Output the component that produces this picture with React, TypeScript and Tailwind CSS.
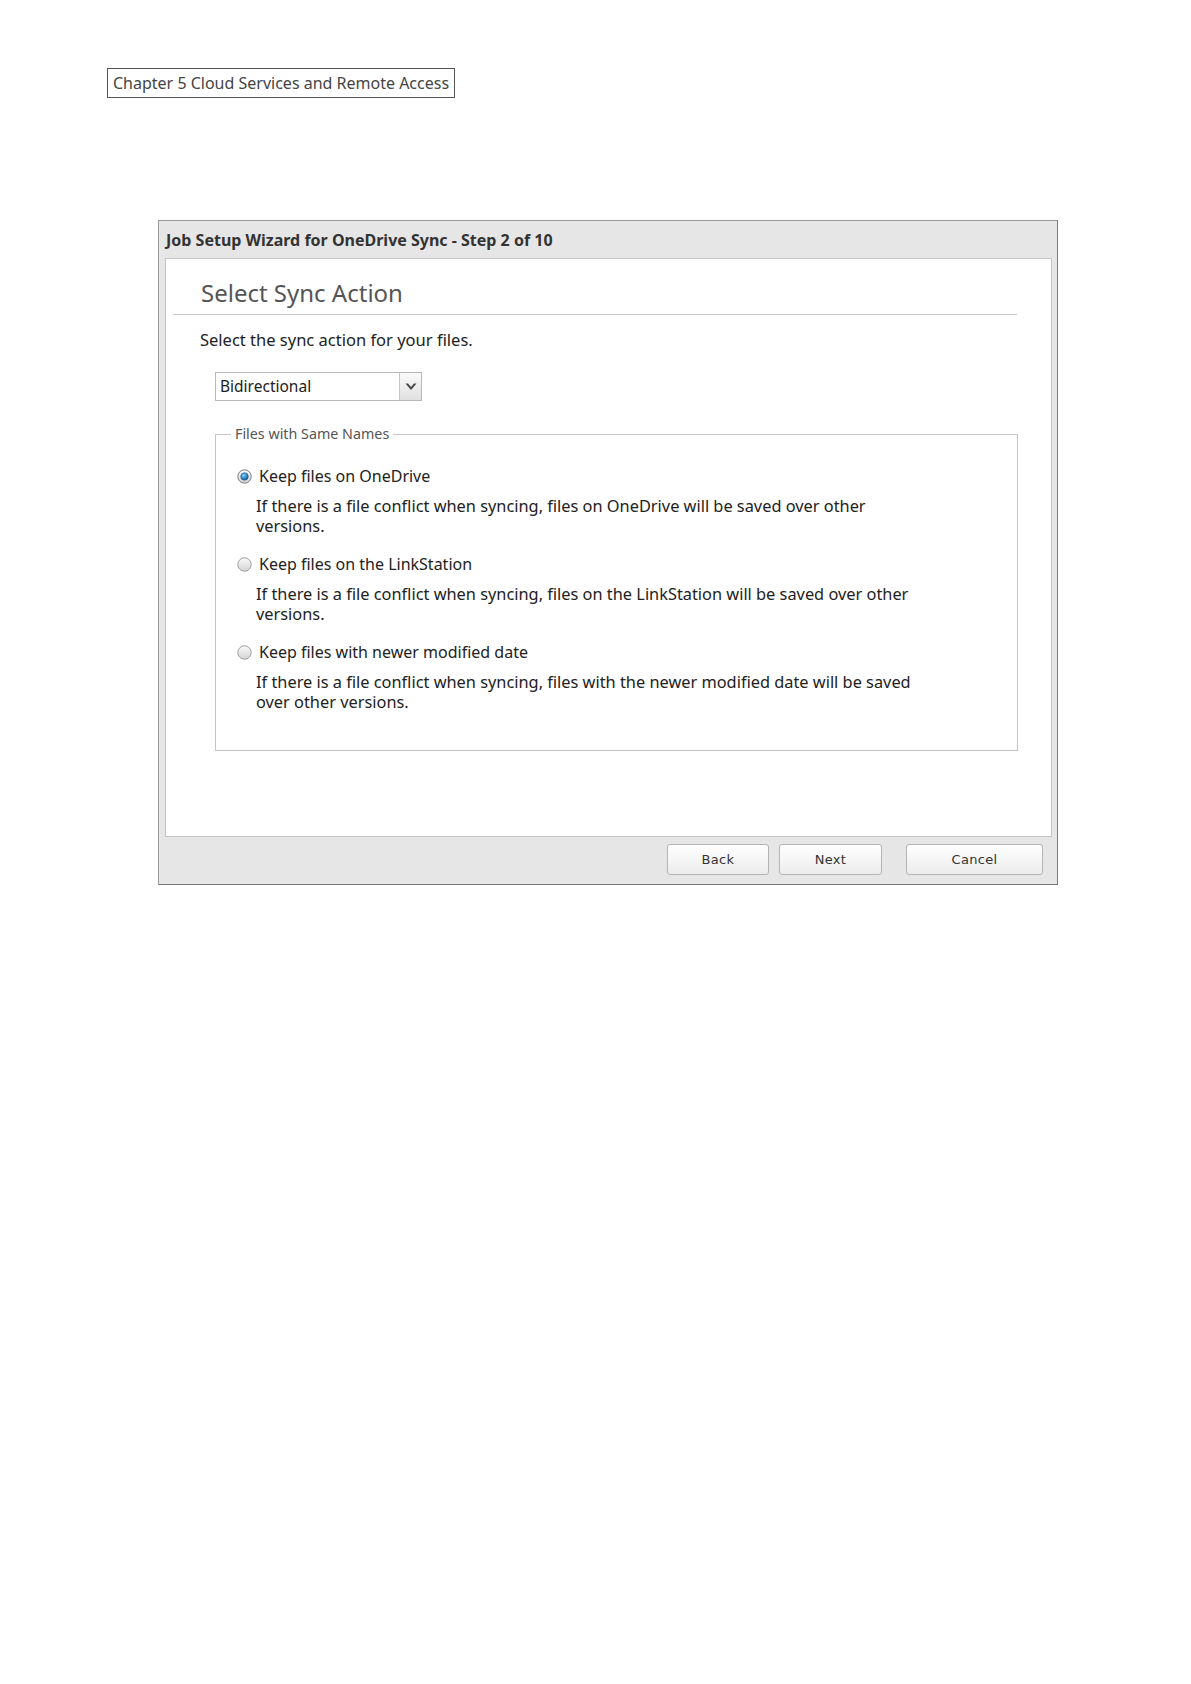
import React from "react";

const body = { fontFamily: '"Noto Sans", "Open Sans", sans-serif' } as const;

function Radio({ checked }: { checked: boolean }) {
  return (
    <svg width="15" height="15" viewBox="0 0 15 15" className="shrink-0">
      <defs>
        <linearGradient id={checked ? "rgc" : "rgu"} x1="0" y1="0" x2="0" y2="1">
          <stop offset="0" stopColor="#fbfbfb" />
          <stop offset="1" stopColor="#d3d3d3" />
        </linearGradient>
        <radialGradient id="dot" cx="0.4" cy="0.35" r="0.7">
          <stop offset="0" stopColor="#8fd0ff" />
          <stop offset="0.6" stopColor="#2a7fc6" />
          <stop offset="1" stopColor="#15508a" />
        </radialGradient>
      </defs>
      <circle cx="7.5" cy="7.5" r="6.7" fill={`url(#${checked ? "rgc" : "rgu"})`} stroke={checked ? "#7c7c7c" : "#9e9e9e"} strokeWidth="1" />
      {checked && <circle cx="7.5" cy="7.5" r="3.8" fill="url(#dot)" stroke="#2b5f8f" strokeWidth="0.6" />}
    </svg>
  );
}

function Option({ checked, label, lines }: { checked: boolean; label: string; lines: string[] }) {
  return (
    <div className="flex flex-col">
      <div className="flex items-center h-[20px] gap-[7px]">
        <Radio checked={checked} />
        <span className="text-[16px] leading-[20px] text-[#222]">{label}</span>
      </div>
      <div className="mt-[10px] ml-[19px] text-[16.35px] leading-[20px] text-[#222]">
        {lines.map((l, i) => (
          <div key={i}>{l}</div>
        ))}
      </div>
    </div>
  );
}

function Btn({ w, children }: { w: string; children: React.ReactNode }) {
  return (
    <div
      className={`${w} h-[31px] flex items-center justify-center rounded-[3px] border border-[#b4b4b4] bg-gradient-to-b from-[#ffffff] to-[#ececec] text-[13px] text-[#333]`}
      style={{ fontFamily: '"DejaVu Sans", "Liberation Sans", sans-serif', letterSpacing: "0.3px" }}
    >
      {children}
    </div>
  );
}

export default function App() {
  return (
    <div className="w-[1191px] h-[1684px] bg-white flex flex-col items-start" style={body}>
      <div className="ml-[107px] mt-[68px] h-[30px] w-[348px] border border-[#555] flex items-center pl-[5px] text-[16px] text-[#444]">
        Chapter 5 Cloud Services and Remote Access
      </div>

      <div className="ml-[158px] mt-[122px] w-[900px] h-[665px] bg-[#e6e6e6] border border-[#9a9a9a] border-r-[#7a7a7a] border-b-[#7a7a7a] flex flex-col">
        <div className="h-[37px] flex items-center pl-[7px] text-[16px] font-bold text-[#333]">
          Job Setup Wizard for OneDrive Sync - Step 2 of 10
        </div>
        <div className="ml-[6px] mr-[5px] h-[579px] bg-white border border-[#c4c4c4] flex flex-col pt-[19px]">
          <div className="pl-[35px] text-[24px] leading-[30px] text-[#555]">Select Sync Action</div>
          <div className="mt-[6px] ml-[7px] w-[844px] h-px bg-[#c8c8c8]" />
          <div className="mt-[15px] pl-[34px] text-[16.5px] leading-[20px] text-[#222]">Select the sync action for your files.</div>
          <div className="mt-[22px] ml-[49px] w-[207px] h-[29px] border border-[#b8b8b8] flex">
            <div className="flex-1 flex items-center pl-[4px] text-[15.5px] text-[#222]">Bidirectional</div>
            <div className="w-[22px] border-l border-[#c8c8c8] bg-gradient-to-b from-[#fafafa] to-[#e0e0e0] flex items-center justify-center">
              <svg width="12" height="8" viewBox="0 0 12 8">
                <path d="M0.5 0.5 L6 7 L11.5 0.5 L9 0.5 L6 4 L3 0.5 Z" fill="#454545" />
              </svg>
            </div>
          </div>
          <fieldset className="mt-[24px] ml-[49px] w-[803px] border border-[#c4c4c4] pl-[21px] pb-[38px] pt-[23px]">
            <legend className="ml-[-6px] px-[4px] text-[14.3px] leading-[18px] text-[#555]">Files with Same Names</legend>
            <div className="flex flex-col gap-[18px]">
              <Option
                checked
                label="Keep files on OneDrive"
                lines={["If there is a file conflict when syncing, files on OneDrive will be saved over other", "versions."]}
              />
              <Option
                checked={false}
                label="Keep files on the LinkStation"
                lines={["If there is a file conflict when syncing, files on the LinkStation will be saved over other", "versions."]}
              />
              <Option
                checked={false}
                label="Keep files with newer modified date"
                lines={["If there is a file conflict when syncing, files with the newer modified date will be saved", "over other versions."]}
              />
            </div>
          </fieldset>
        </div>
        <div className="flex justify-end pr-[14px] pt-[7px]">
          <Btn w="w-[102px]">Back</Btn>
          <div className="w-[10px]" />
          <Btn w="w-[103px]">Next</Btn>
          <div className="w-[24px]" />
          <Btn w="w-[137px]">Cancel</Btn>
        </div>
      </div>
    </div>
  );
}
